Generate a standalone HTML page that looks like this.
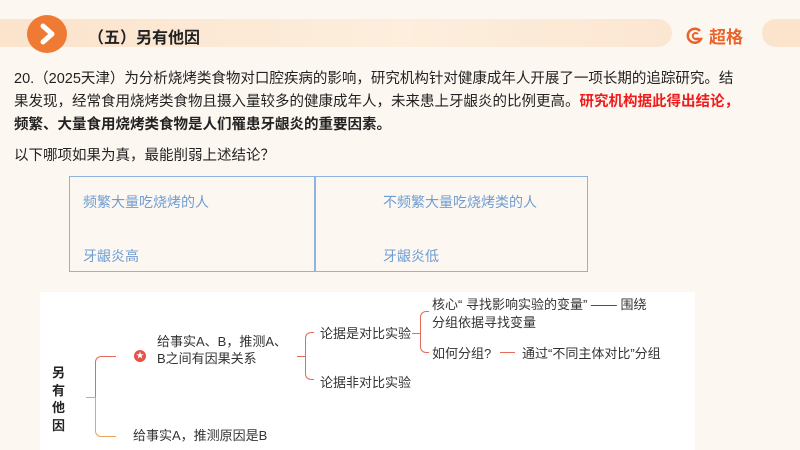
<!DOCTYPE html>
<html><head><meta charset="utf-8"><style>
*{margin:0;padding:0;box-sizing:border-box}
body{width:800px;height:450px;overflow:hidden;background:#fdf7f1;font-family:"Liberation Sans","Noto Sans CJK SC",sans-serif;position:relative;color:#222}
.a{position:absolute;white-space:nowrap}
.band{left:0;top:19px;width:672px;height:28px;border-radius:0 14px 14px 0;background:linear-gradient(90deg,#fbe3cc,#fdeedd 60%,#fbe6d2)}
.pill{left:762px;top:19px;width:60px;height:28px;border-radius:14px;background:#fbe3cc}
.circ{left:27px;top:15px;width:40px;height:38px;border-radius:50%;background:#ef7a33}
.p{font-size:14.5px;line-height:23px}
.tb{left:69px;top:176px;width:519px;height:96px;border:1.5px solid #8fb3da}
.t{color:#6e9dd2;font-size:14px}
.m{font-size:13px;color:#333}
.ln{position:absolute;border-color:#e46a5a}
</style></head><body>
<div class="a band"></div><div class="a pill"></div>
<div class="a circ"><svg width="40" height="38"><path d="M16 11 L25 19 L16 27" stroke="#fff" stroke-width="5" fill="none" stroke-linecap="round" stroke-linejoin="round"/></svg></div>
<div class="a" style="left:88px;top:24px;font-size:16px;font-weight:bold;color:#222">（五）另有他因</div>
<div class="a" style="left:685px;top:23px;"><svg width="20" height="20" style="vertical-align:middle"><path d="M15 5 A7 7 0 1 0 16 13 L10 13" stroke="#e8642b" stroke-width="2.5" fill="none"/><path d="M13 8 A3 3 0 1 0 13 12" stroke="#e8642b" stroke-width="2" fill="none"/></svg><span style="font-size:17px;font-weight:bold;color:#e8642b;vertical-align:middle;margin-left:4px">超格</span></div>
<div class="a p" style="left:14px;top:68px">20.（2025天津）为分析烧烤类食物对口腔疾病的影响，研究机构针对健康成年人开展了一项长期的追踪研究。结</div>
<div class="a p" style="left:14px;top:91px">果发现，经常食用烧烤类食物且摄入量较多的健康成年人，未来患上牙龈炎的比例更高。<b style="color:#ee1c1c">研究机构据此得出结论，</b></div>
<div class="a p" style="left:14px;top:114px;font-weight:bold">频繁、大量食用烧烤类食物是人们罹患牙龈炎的重要因素。</div>
<div class="a p" style="left:14px;top:145px">以下哪项如果为真，最能削弱上述结论？</div>
<div class="a tb"></div>
<div class="a" style="left:314px;top:176px;width:1.5px;height:96px;background:#8fb3da"></div>
<div class="a t" style="left:83px;top:192px">频繁大量吃烧烤的人</div>
<div class="a t" style="left:83px;top:246px">牙龈炎高</div>
<div class="a t" style="left:383px;top:192px">不频繁大量吃烧烤类的人</div>
<div class="a t" style="left:383px;top:246px">牙龈炎低</div>
<div class="a" style="left:40px;top:292px;width:655px;height:158px;background:#fff"></div>
<div class="a" style="left:52px;top:364px;font-size:13px;font-weight:bold;line-height:17.5px;white-space:normal;width:16px">另有他因</div>
<div class="ln" style="left:86px;top:397px;width:9px;border-top:1.5px solid #e9a35a"></div>
<div class="ln" style="left:95px;top:356px;width:21px;height:42px;border-left:1.5px solid #e46a5a;border-top:1.5px solid #e46a5a;border-radius:6px 0 0 0"></div>
<div class="ln" style="left:95px;top:397px;width:21px;height:40px;border-left:1.5px solid #e9a35a;border-bottom:1.5px solid #e9a35a;border-radius:0 0 0 6px"></div>
<div class="a" style="left:134px;top:350px;width:12px;height:12px;border-radius:50%;background:#e8504a;color:#fff;font-size:8px;text-align:center;line-height:12px">★</div>
<div class="a m" style="left:157px;top:331px">给事实A、B，推测A、</div>
<div class="a m" style="left:157px;top:348px">B之间有因果关系</div>
<div class="ln" style="left:297px;top:356px;width:8px;border-top:1.5px solid #e46a5a"></div>
<div class="ln" style="left:305px;top:332px;width:9px;height:48px;border:1.5px solid #e46a5a;border-right:none;border-radius:6px 0 0 6px"></div>
<div class="a m" style="left:320px;top:323px">论据是对比实验</div>
<div class="a m" style="left:320px;top:372px">论据非对比实验</div>
<div class="ln" style="left:412px;top:333px;width:9px;border-top:1.5px solid #e46a5a"></div>
<div class="ln" style="left:420px;top:311px;width:9px;height:42px;border:1.5px solid #e46a5a;border-right:none;border-radius:6px 0 0 6px"></div>
<div class="a m" style="left:432px;top:294px">核心“ 寻找影响实验的变量” —— 围绕</div>
<div class="a m" style="left:432px;top:312px">分组依据寻找变量</div>
<div class="a m" style="left:432px;top:343px">如何分组?</div>
<div class="ln" style="left:500px;top:352px;width:15px;border-top:1.5px solid #e46a5a"></div>
<div class="a m" style="left:522px;top:343px">通过“不同主体对比”分组</div>
<div class="a m" style="left:133px;top:425px">给事实A，推测原因是B</div>
</body></html>
